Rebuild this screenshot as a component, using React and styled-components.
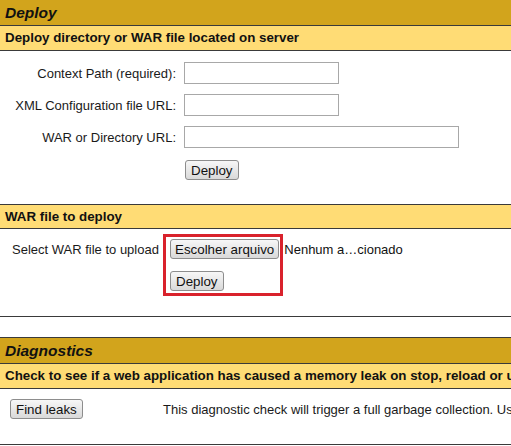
import React from "react";
import styled, { createGlobalStyle } from "styled-components";

const Global = createGlobalStyle`
  html, body { margin: 0; padding: 0; background: #fff; overflow: hidden; }
  body { font-family: "Liberation Sans", Arial, sans-serif; font-size: 13px; color: #111; }
`;

const Page = styled.div`
  width: 511px;
  height: 446px;
  overflow: hidden;
  display: flex;
  flex-direction: column;
  gap: 20px;
`;

const Section = styled.section`
  display: flex;
  flex-direction: column;
  border-top: ${(p) => (p.$topBorder ? "1px solid #3a3a3a" : "none")};
  border-bottom: 1px solid #3a3a3a;
  width: 620px;
`;

const TitleBar = styled.div`
  height: 25px;
  line-height: 26px;
  padding-left: 5px;
  background: #d2a41c;
  border-bottom: 1px solid #3a3a3a;
  font-size: 15.5px;
  font-weight: bold;
  font-style: italic;
  color: #111;
  white-space: nowrap;
`;

const HeaderBar = styled.div`
  height: ${(p) => p.$h || 24}px;
  line-height: ${(p) => p.$h || 24}px;
  padding-left: 5px;
  background: #ffdc75;
  border-bottom: 1px solid #3a3a3a;
  border-top: ${(p) => (p.$topBorder ? "1px solid #3a3a3a" : "none")};
  font-size: 13.33px;
  font-weight: bold;
  color: #111;
  white-space: nowrap;
`;

const FormGrid = styled.div`
  display: grid;
  grid-template-columns: 176px auto;
  column-gap: 8px;
  row-gap: 10px;
  justify-content: start;
  align-items: center;
  padding: 11px 0 24px;
`;

const Label = styled.label`
  text-align: right;
  white-space: nowrap;
  color: #1a1a1a;
`;

const PlainLabel = styled.span`
  white-space: nowrap;
  color: #1a1a1a;
`;

const TextInput = styled.input`
  box-sizing: border-box;
  height: 22px;
  width: ${(p) => p.$w}px;
  border: 1px solid #a8a8a8;
  background: #fff;
  margin: 0;
  padding: 1px 3px;
  font: inherit;
`;

const Button = styled.button`
  box-sizing: border-box;
  height: 20px;
  padding: 0 ${(p) => p.$pad ?? 5}px;
  margin: 0;
  border: 1px solid #8d8d8d;
  border-radius: 3px;
  background: linear-gradient(#f7f7f7, #e8e8e8 50%, #d9d9d9);
  font-family: "Liberation Sans", Arial, sans-serif;
  font-size: 13.33px;
  color: #111;
  white-space: nowrap;
  justify-self: start;
`;

const ButtonCell = styled.div`
  grid-column: 2;
  margin-top: 2px;
  padding-left: 1px;
`;

const UploadArea = styled.div`
  position: relative;
  display: grid;
  grid-template-columns: 151px auto;
  grid-template-rows: 20px 20px;
  justify-content: start;
  column-gap: 7px;
  row-gap: 12px;
  align-items: center;
  padding: 10px 0 25px 12px;
`;

const FilePicker = styled.div`
  display: flex;
  align-items: center;
  gap: 5px;
  white-space: nowrap;
`;

const FileName = styled.span`
  color: #111;
`;

const Highlight = styled.div`
  position: absolute;
  left: 163px;
  top: 5px;
  width: 120px;
  height: 62px;
  box-sizing: border-box;
  border: 3px solid #d9222c;
  pointer-events: none;
`;

const DiagRow = styled.div`
  display: grid;
  grid-template-columns: 153px auto;
  align-items: center;
  padding: 10px 0 25px 10px;
  white-space: nowrap;
`;

const DiagText = styled.span`
  color: #1a1a1a;
`;

export default function App() {
  return (
    <>
      <Global />
      <Page>
        <Section>
          <TitleBar>Deploy</TitleBar>
          <HeaderBar>Deploy directory or WAR file located on server</HeaderBar>
          <FormGrid>
            <Label>Context Path (required):</Label>
            <TextInput $w={155} />
            <Label>XML Configuration file URL:</Label>
            <TextInput $w={155} />
            <Label>WAR or Directory URL:</Label>
            <TextInput $w={275} />
            <ButtonCell>
              <Button>Deploy</Button>
            </ButtonCell>
          </FormGrid>
          <HeaderBar $topBorder $h={23}>WAR file to deploy</HeaderBar>
          <UploadArea>
            <PlainLabel>Select WAR file to upload</PlainLabel>
            <FilePicker>
              <Button $pad={4}>Escolher arquivo</Button>
              <FileName>Nenhum a…cionado</FileName>
            </FilePicker>
            <span />
            <Button>Deploy</Button>
            <Highlight />
          </UploadArea>
        </Section>
        <Section $topBorder>
          <TitleBar>Diagnostics</TitleBar>
          <HeaderBar>
            Check to see if a web application has caused a memory leak on stop, reload or undeploy
          </HeaderBar>
          <DiagRow>
            <Button>Find leaks</Button>
            <DiagText>
              This diagnostic check will trigger a full garbage collection. Use it with extreme caution on production systems.
            </DiagText>
          </DiagRow>
        </Section>
      </Page>
    </>
  );
}
